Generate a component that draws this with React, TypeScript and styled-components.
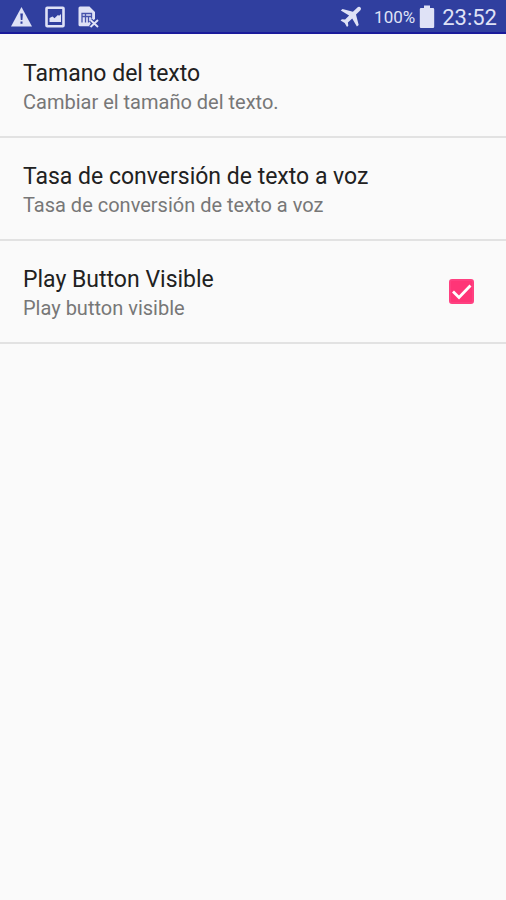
import React, { useState } from "react";
import styled, { createGlobalStyle } from "styled-components";

const GlobalStyle = createGlobalStyle`
  *, *::before, *::after { box-sizing: border-box; }
  body {
    margin: 0;
    background: #fafafa;
    font-family: Roboto, "Liberation Sans", sans-serif;
  }
`;

const Screen = styled.div`
  min-height: 100vh;
  display: flex;
  flex-direction: column;
`;

const StatusBar = styled.header`
  display: flex;
  align-items: center;
  justify-content: space-between;
  height: 34px;
  padding: 2px 9px 0 10px;
  background: #303f9f;
  border-bottom: 2px solid #1a1b9b;
  color: #dfe2f6;
`;

const StatusGroup = styled.div<{ $gap: number }>`
  display: flex;
  align-items: center;
  gap: ${({ $gap }) => $gap}px;
`;

const Glyph = styled.svg`
  display: block;
  flex: none;
`;

const BatteryText = styled.span`
  margin-left: 8px;
  font-size: 17px;
  line-height: 20px;
`;

const Clock = styled.time`
  margin-left: 3px;
  padding-top: 2px;
  font-size: 22px;
  line-height: 26px;
`;

const PreferenceList = styled.ul`
  margin: 0;
  padding: 1px 0 0;
  list-style: none;
`;

const PreferenceItem = styled.li`
  border-bottom: 2px solid #e2e2e2;
`;

const PreferenceButton = styled.button`
  display: block;
  width: 100%;
  padding: 0 23px;
  border: 0;
  background: transparent;
  font: inherit;
  text-align: left;
  cursor: pointer;
`;

const PreferenceLabel = styled.label`
  display: flex;
  align-items: center;
  justify-content: space-between;
  padding: 0 32px 0 23px;
  cursor: pointer;
`;

const PreferenceText = styled.span`
  display: block;
  padding: 25px 0 20px;
`;

const Title = styled.span`
  display: block;
  font-size: 23px;
  line-height: 28px;
  color: #212121;
`;

const Summary = styled.span`
  display: block;
  font-size: 20px;
  line-height: 28px;
  color: #777777;
`;

const CheckboxBox = styled.span`
  display: grid;
  flex: none;
  width: 25px;
  height: 25px;

  > * {
    grid-area: 1 / 1;
  }
`;

const Checkbox = styled.input`
  appearance: none;
  width: 25px;
  height: 25px;
  margin: 0;
  border: 2px solid #757575;
  border-radius: 3px;
  cursor: pointer;

  &:checked {
    border-color: #ff4081;
    background: #ff3577;
  }
`;

const Tick = styled(Glyph)`
  pointer-events: none;
`;

const WarningIcon = () => (
  <Glyph width="22" height="22" viewBox="0 0 22 22" aria-hidden="true">
    <path d="M11.5 1 22 20.5H1Z" fill="currentColor" />
    <path d="M10.3 7.5h2.6l-.5 6.5h-1.6ZM10.5 15.5h2v2.2h-2Z" fill="#303f9f" />
  </Glyph>
);

const PictureIcon = () => (
  <Glyph width="20" height="22" viewBox="0 0 20 22" aria-hidden="true">
    <rect x="1.5" y="1.8" width="17" height="18.4" rx=".7" fill="none" stroke="currentColor" strokeWidth="2.6" />
    <path d="M4.5 16v-4l3-1.5 2 1.8 3.4-3.3 1.2.8L16 8v8Z" fill="currentColor" />
  </Glyph>
);

const SimIcon = () => (
  <Glyph width="22" height="22" viewBox="0 0 22 22" aria-hidden="true">
    <path d="M2 .5h9.5L17 6v7l-4 3-1 4.2H2A1.5 1.5 0 0 1 .5 18.7V2A1.5 1.5 0 0 1 2 .5Z" fill="currentColor" />
    <path d="M4 16.5v-9h9.5v5M4 10.5h3.5v6M7.5 7.5v3h3v6M10.5 10.5h3" fill="none" stroke="#4653ab" strokeWidth="1.3" />
    <path d="m12.5 14 7.5 7M20 14l-7.5 7" stroke="#303f9f" strokeWidth="4" />
    <path d="m12.5 14 7.5 7M20 14l-7.5 7" stroke="currentColor" strokeWidth="1.9" />
  </Glyph>
);

const AirplaneIcon = () => (
  <Glyph width="22" height="22" viewBox="0 0 22 22" aria-hidden="true">
    <path
      d="M20.5 1.4c-1-1-2.5-.6-3.6.5l-4 3.8L2.5 2.9.8 4.6l8.3 4.8-4 4.2-3.2-.4-1.3 1.3 4.1 2.4 2.3 4.1 1.3-1.3-.4-3.1 4.3-4.1 4.7 8.1 1.8-1.7-2.7-10.3 3.9-3.9c1.1-1.1 1.5-2.4.6-3.3Z"
      fill="currentColor"
    />
  </Glyph>
);

const BatteryIcon = () => (
  <Glyph width="16" height="24" viewBox="0 0 16 24" aria-hidden="true">
    <path d="M5 .5h6V3h3a1.2 1.2 0 0 1 1.2 1.2v17.6A1.2 1.2 0 0 1 14 23H2a1.2 1.2 0 0 1-1.2-1.2V4.2A1.2 1.2 0 0 1 2 3h3Z" fill="currentColor" />
  </Glyph>
);

export default function App() {
  const [playVisible, setPlayVisible] = useState(true);

  return (
    <Screen>
      <GlobalStyle />
      <StatusBar>
        <StatusGroup $gap={13}>
          <WarningIcon />
          <PictureIcon />
          <SimIcon />
        </StatusGroup>
        <StatusGroup $gap={4}>
          <AirplaneIcon />
          <BatteryText>100%</BatteryText>
          <BatteryIcon />
          <Clock>23:52</Clock>
        </StatusGroup>
      </StatusBar>
      <main>
        <PreferenceList>
          <PreferenceItem>
            <PreferenceButton type="button">
              <PreferenceText>
                <Title>Tamano del texto</Title>
                <Summary>Cambiar el tamaño del texto.</Summary>
              </PreferenceText>
            </PreferenceButton>
          </PreferenceItem>
          <PreferenceItem>
            <PreferenceButton type="button">
              <PreferenceText>
                <Title>Tasa de conversión de texto a voz</Title>
                <Summary>Tasa de conversión de texto a voz</Summary>
              </PreferenceText>
            </PreferenceButton>
          </PreferenceItem>
          <PreferenceItem>
            <PreferenceLabel htmlFor="play-visible">
              <PreferenceText>
                <Title>Play Button Visible</Title>
                <Summary>Play button visible</Summary>
              </PreferenceText>
              <CheckboxBox>
                <Checkbox
                  id="play-visible"
                  type="checkbox"
                  checked={playVisible}
                  onChange={(event) => setPlayVisible(event.target.checked)}
                />
                {playVisible && (
                  <Tick width="25" height="25" viewBox="0 0 25 25" aria-hidden="true">
                    <path d="m4 12.5 6 6L21.5 6.5" fill="none" stroke="#fff" strokeWidth="2.8" />
                  </Tick>
                )}
              </CheckboxBox>
            </PreferenceLabel>
          </PreferenceItem>
        </PreferenceList>
      </main>
    </Screen>
  );
}
